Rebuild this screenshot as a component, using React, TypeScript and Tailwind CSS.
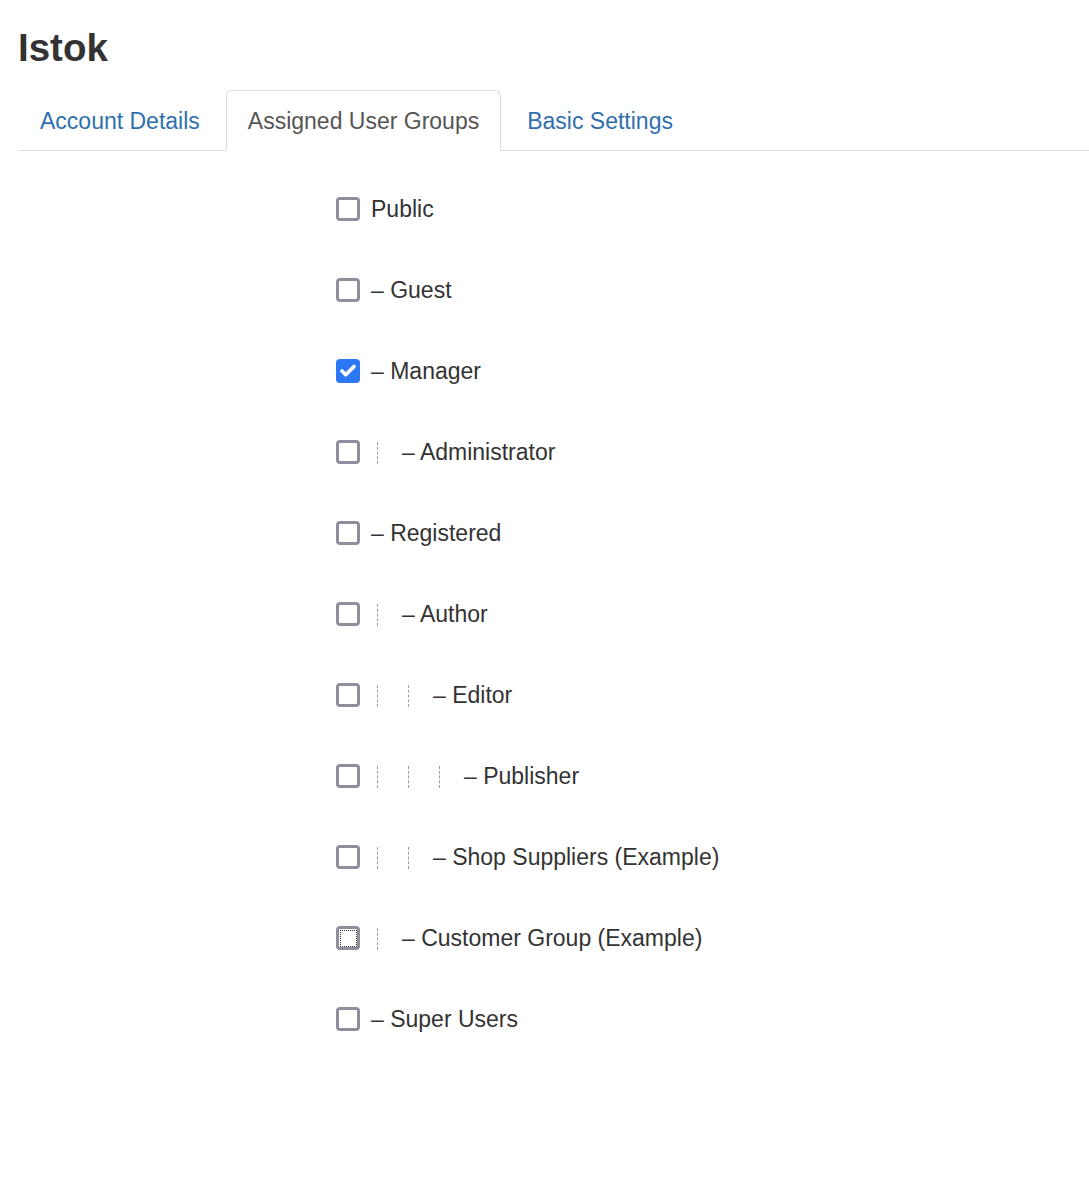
import { Check } from 'lucide-react';

interface Group {
  name: string;
  level: number;
  checked?: boolean;
  focused?: boolean;
}

const groups: Group[] = [
  { name: 'Public', level: -1 },
  { name: 'Guest', level: 0 },
  { name: 'Manager', level: 0, checked: true },
  { name: 'Administrator', level: 1 },
  { name: 'Registered', level: 0 },
  { name: 'Author', level: 1 },
  { name: 'Editor', level: 2 },
  { name: 'Publisher', level: 3 },
  { name: 'Shop Suppliers (Example)', level: 2 },
  { name: 'Customer Group (Example)', level: 1, focused: true },
  { name: 'Super Users', level: 0 },
];

const tabs = ['Account Details', 'Assigned User Groups', 'Basic Settings'];

function Checkbox({ checked, focused }: { checked?: boolean; focused?: boolean }) {
  if (checked) {
    return (
      <span className="w-[24px] h-[24px] rounded-[4px] bg-[#2b77f5] flex items-center justify-center shrink-0">
        <Check className="w-[18px] h-[18px] text-white" strokeWidth={5} />
      </span>
    );
  }
  return (
    <span className="w-[24px] h-[24px] rounded-[4px] border-[3px] border-[#8f8e9c] bg-white flex items-center justify-center shrink-0">
      {focused && <span className="w-[17px] h-[17px] border border-dotted border-[#333]" />}
    </span>
  );
}

export default function App() {
  const active = 1;
  return (
    <div className="min-h-[1188px] bg-white px-[18px] pt-[27px] font-['Liberation_Sans',Arial,sans-serif] text-[#333]">
      <h1 className="text-[38.5px] leading-[42px] font-bold">Istok</h1>

      <div className="mt-[21px] flex items-end border-b border-[#ddd] mr-[-18px]">
        {tabs.map((t, i) => (
          <div
            key={t}
            className={
              i === active
                ? 'px-[21px] pt-[2px] mr-[4px] -mb-px h-[61px] flex items-center text-[23px] text-[#555] bg-white border border-[#ddd] border-b-white rounded-t-[6px]'
                : 'h-[60px] pt-[2px] px-[22px] mr-[4px] flex items-center text-[23px] text-[#2f6fae]'
            }
          >
            {t}
          </div>
        ))}
      </div>

      <div className="pl-[318px] pt-[17px]">
        {groups.map((g) => (
          <div key={g.name} className="h-[81.1px] flex items-center">
            <Checkbox checked={g.checked} focused={g.focused} />
            <div className="ml-[11px] flex items-center text-[23px] leading-[30px]">
              {Array.from({ length: Math.max(g.level, 0) }).map((_, k) => (
                <span key={k} className="w-[31px] h-[30px] flex items-center">
                  <span className="ml-[6px] mt-[2px] h-[22px] border-l-[1.5px] border-dashed border-[#a49c9c]" />
                </span>
              ))}
              <span>{g.level >= 0 ? '– ' + g.name : g.name}</span>
            </div>
          </div>
        ))}
      </div>
    </div>
  );
}
